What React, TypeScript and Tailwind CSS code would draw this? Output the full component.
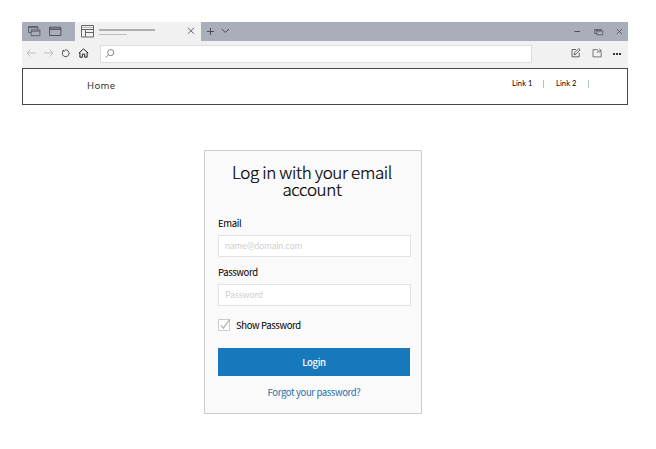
import type { ReactNode } from 'react';

function Icon({ w, h, color = '#4b4f57', sw = 1, className = '', children }: { w: number; h: number; color?: string; sw?: number; className?: string; children: ReactNode }) {
  return (
    <svg width={w} height={h} viewBox={`0 0 ${w} ${h}`} fill="none" stroke={color} strokeWidth={sw} className={`block shrink-0 ${className}`}>
      {children}
    </svg>
  );
}

function TabBar() {
  return (
    <div className="flex h-[19px] bg-[#a9aeba]">
      <div className="flex w-[53px] pl-[6px] pt-1">
        <Icon w={13} h={12} color="#565a63" sw={0.9}>
          <path d="M3.2 6.5H.5v-6h9.2v3M.5 1.6h9.2" />
          <path d="M3.2 3.9h8.7v5.8H3.2zM3.2 5.2h8.7" />
        </Icon>
        <Icon w={13} h={12} color="#464a52" className="ml-[8px]" sw={0.9}>
          <path d="M.6 1.2h11.3v8.3H.6zM.6 3.4h11.3" />
          <path d="M.6 2.4h11.3" strokeWidth={0.5} />
        </Icon>
      </div>
      <div className="flex w-[126px] bg-[#f1f1f1] pl-[6px] pt-[3px]">
        <Icon w={14} h={13} color="#666">
          <path d="M.5.5h12v11.5H.5zM.5 4.5h12M4.5 4.5V12M4.5 7.5h8" />
          <path d="M.5 2.5h12" strokeWidth={0.4} />
        </Icon>
        <div className="ml-1 mt-1 flex w-[56px] flex-col gap-[3px]">
          <div className="h-[1.5px] bg-[#b0b0b0]" />
          <div className="h-px w-7 bg-[#bdbdbd]" />
        </div>
        <Icon w={8} h={8} color="#666" className="ml-[32px] mt-[2px]">
          <path d="M1 .8l6 6M7 .8l-6 6" />
        </Icon>
      </div>
      <div className="flex flex-1 items-center">
        <Icon w={8} h={8} className="-mt-px ml-[5px]">
          <path d="M4.5 1v7M1 4.5h7" />
        </Icon>
        <Icon w={9} h={6} className="-mt-px ml-[7px]">
          <path d="M.7 1l3.6 3.4L8 1" />
        </Icon>
        <Icon w={7} h={3} className="ml-auto">
          <path d="M.5 1.5h5.5" />
        </Icon>
        <Icon w={10} h={8} className="ml-[13px]" color="#5b5f68" sw={0.9}>
          <path d="M2.8 5.5H.7v-4h6.5v1.2M2.8 3h6v3.8h-6zM.7 2.3h6.5" />
        </Icon>
        <Icon w={7} h={7} className="ml-[12px] mr-[5px]" color="#5b5f68" sw={0.9}>
          <path d="M.8 1l5.2 5M6 1L.8 6" />
        </Icon>
      </div>
    </div>
  );
}

function Toolbar() {
  return (
    <div className="flex h-[27px] items-center bg-[#f1f1f1] pb-[3px]">
      <Icon w={10} h={8} color="#bcbcbc" className="ml-1">
        <path d="M9.5 4H1M4.5.5L1 4l3.5 3.5" />
      </Icon>
      <Icon w={10} h={8} color="#bcbcbc" className="ml-2">
        <path d="M0 4h9M5.5.5L9 4 5.5 7.5" />
      </Icon>
      <Icon w={9} h={9} color="#555" className="ml-[7px] mt-px">
        <path d="M3.1 1.3A3.4 3.4 0 103.9 1M1.5 1.5h1.6v1.4" />
      </Icon>
      <Icon w={11} h={10} color="#222" className="ml-[8px]">
        <path d="M.8 5.2L5.5.9l4.7 4.3M1.9 4.4v4.8h2.4V6.1h2.4v3.1h2.4V4.4" />
      </Icon>
      <div className="ml-[11px] mt-px flex h-[18px] w-[432px] items-center border border-[#dddddd] bg-white pl-1">
        <Icon w={10} h={9} color="#777" sw={0.9} className="-mt-px">
          <circle cx="5.7" cy="3.6" r="3.1" />
          <path d="M3.5 5.9L.6 8.7" />
        </Icon>
      </div>
      <Icon w={10} h={10} color="#555" className="ml-[39px]" sw={0.9}>
        <path d="M5 1.5H1v7.3h7.2V5M3 6.8l.5-2L7.7.6l1.4 1.3L5 6.2z" />
      </Icon>
      <Icon w={11} h={10} color="#666" className="ml-[11px]" sw={0.9}>
        <path d="M6 1.7H1v7.2h8.2V4.2M5.2 5c0-1.6.8-2.2 4-2.2M7.2.8l2.3 2-2.3 1.8" />
      </Icon>
      <div className="ml-[10px] mt-px flex gap-px">
        <div className="size-[2px] bg-[#333]" />
        <div className="size-[2px] bg-[#333]" />
        <div className="size-[2px] bg-[#333]" />
      </div>
    </div>
  );
}

function SiteHeader() {
  return (
    <header className="flex h-[37px] justify-between border border-[#484848] bg-white">
      <div className="pl-16 pt-[11px] font-['Noto_Sans',sans-serif] text-[9.5px] leading-3 tracking-[0.35px] text-[#333]">Home</div>
      <nav className="flex pr-[38px] pt-[10px] font-['Lato',sans-serif] text-[7.5px] leading-[10px] tracking-[0.1px] text-black">
        <span className="w-[31px]">Link 1</span>
        <div className="mr-[12px] mt-px h-2 w-px bg-[#a5c5cf]" />
        <span className="w-[32px]">Link 2</span>
        <div className="mt-px h-2 w-px bg-[#a5c5cf]" />
      </nav>
    </header>
  );
}

function Field({ label, placeholder, type }: { label: string; placeholder: string; type: string }) {
  return (
    <label className="block leading-3 text-black">
      {label}
      <input
        type={type}
        placeholder={placeholder}
        className="mt-[6px] block h-[22px] w-[193px] border border-[#e3e3e3] bg-white px-[6px] pb-[2px] font-['Lato',sans-serif] text-[9px] tracking-normal outline-none placeholder:text-[#cfcfcf]"
      />
    </label>
  );
}

function LoginCard() {
  return (
    <form className="mx-auto mt-[45px] h-[264px] w-[218px] border border-[#cecece] bg-[#fafafa] px-[13px] pt-[12px] font-['Noto_Sans_CJK_SC',sans-serif] text-[9.5px] tracking-[-0.36px]">
      <h1 className="whitespace-nowrap pr-[2px] text-center text-[17px] font-light leading-[17px] tracking-[-0.37px] text-black [-webkit-text-stroke:0.2px_black]">
        Log in with your email
        <br />
        account
      </h1>
      <div className="mt-[20px] flex flex-col gap-[9px]">
        <Field label="Email" placeholder="name@domain.com" type="email" />
        <Field label="Password" placeholder="Password" type="password" />
      </div>
      <div className="mt-[12px] flex h-[14px] items-center text-black">
        <Icon w={13} h={14} color="#cccccc">
          <path d="M.5 1.5h11v11H.5z" fill="#fff" />
          <path d="M3 7.3l2.3 2.8L12 1.2" stroke="#b5b5b5" strokeWidth={1.3} />
        </Icon>
        <span className="ml-[5px] mt-px">Show Password</span>
      </div>
      <button type="button" className="mt-[16px] block h-7 w-[192px] bg-[#1779bc] pt-px font-medium text-white">
        Login
      </button>
      <a className="mt-[10px] block pl-[2px] text-center leading-3 text-[#2a6fa8]">Forgot your password?</a>
    </form>
  );
}

export default function App() {
  return (
    <div className="h-[449px] w-[656px] overflow-hidden bg-white pl-[22px] pt-[22px]">
      <div className="w-[606px]">
        <TabBar />
        <Toolbar />
        <SiteHeader />
      </div>
      <div className="w-[582px]">
        <LoginCard />
      </div>
    </div>
  );
}
